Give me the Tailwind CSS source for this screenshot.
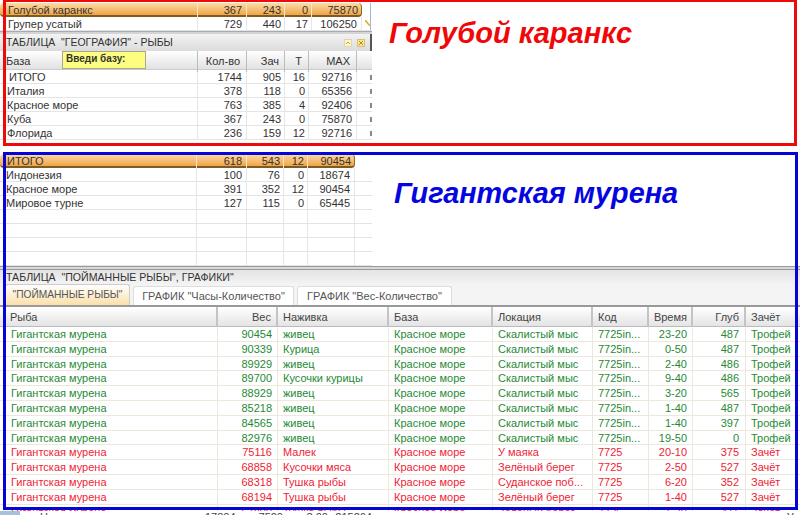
<!DOCTYPE html>
<html lang="en">

<head>
    <meta charset="UTF-8" />
    <title>Рыбы</title>
    <script src="https://cdn.jsdelivr.net/npm/@tailwindcss/browser@4"></script>
</head>

<body>
    <div class="relative w-[800px] h-[515px] overflow-hidden bg-white font-['Liberation_Sans',sans-serif] text-[11px] text-[#333]">
        <!-- ========== TOP TABLES ======= -->
        <div class="w-[372px] h-[266px] flex flex-col">
            <div class="h-[3px]"></div>
            <div id="fishRows"></div>
            <div class="h-[3px] bg-[#d4d4d4] border-t border-[#aaa]"></div>
            <div class="h-[17px] pl-[6px] flex items-center justify-between bg-gradient-to-b from-[#f3f3f3] to-[#dcdcdc]">
                <span class="text-[10.5px]">ТАБЛИЦА &nbsp;"ГЕОГРАФИЯ" - РЫБЫ</span>
                <span class="flex items-center gap-[5px] h-full">
                    <span class="w-[8px] h-[8px] flex items-center justify-center bg-[#fbf4cf] border border-[#ddd8b0]">
                        <svg viewBox="0 0 6 6" class="w-[6px] h-[6px]"><path d="M1 4 L3 2 L5 4" fill="none" stroke="#d8a030" stroke-width="1" /></svg>
                    </span>
                    <span class="w-[8px] h-[8px] flex items-center justify-center bg-[#f8e690] border border-[#d8c070]">
                        <svg viewBox="0 0 6 6" class="w-[6px] h-[6px]"><path d="M1 1 L5 5 M5 1 L1 5" fill="none" stroke="#c08820" stroke-width="1" /></svg>
                    </span>
                    <span class="w-[2px] h-full bg-[#555]"></span>
                </span>
            </div>
            <div class="relative h-[19px] grid grid-cols-[198px_49px_38px_24px_48px_15px] bg-gradient-to-b from-white to-[#e2e2e2] border-b border-[#ccc]">
                <div class="pl-[6px] leading-[21px] border-r border-[#bbb]">База</div>
                <div class="text-right pr-[6px] leading-[20px] border-r border-[#bbb]">Кол-во</div>
                <div class="text-right pr-[5px] leading-[20px] border-r border-[#bbb]">Зач</div>
                <div class="text-right pr-[6px] leading-[20px] border-r border-[#bbb]">Т</div>
                <div class="text-right pr-[6px] leading-[20px] border-r border-[#bbb]">MAX</div>
                <div></div>
                <div class="absolute left-[62px] top-0 w-[84px] h-[18px] pl-[3px] bg-[#fdfd80] border border-[#a8a890] text-[10px] font-bold leading-[13px]">Введи базу:</div>
            </div>
            <div id="geoRows"></div>
            <div class="h-[14px]"></div>
            <div id="geoRows2"></div>
        </div>
        <div class="h-[4px] bg-[#d8d8d8] border-y border-[#999]"></div>
        <!-- ========== CAUGHT FISH TABLE ======= -->
        <div class="h-[15px] pl-[6px] leading-[15px] text-[10.6px] bg-gradient-to-b from-[#e4e4e4] to-[#f4f4f4]">ТАБЛИЦА &nbsp;"ПОЙМАННЫЕ РЫБЫ", ГРАФИКИ"</div>
        <div class="h-[22px] pl-[5px] flex items-end gap-[3px] bg-[#f4f4f4] border-b-2 border-[#999] text-[#555] whitespace-nowrap">
            <div class="h-[21px] w-[125px] text-center text-[10.2px] leading-[20px] rounded-t-[3px] border border-b-0 border-[#ccc] bg-gradient-to-b from-[#fff] to-[#fbdfa8]">"ПОЙМАННЫЕ РЫБЫ"</div>
            <div class="h-[19px] w-[161px] text-center leading-[19px] rounded-t-[3px] border border-b-0 border-[#ddd] bg-white">ГРАФИК "Часы-Количество"</div>
            <div class="h-[19px] w-[155px] text-center leading-[19px] rounded-t-[3px] border border-b-0 border-[#ddd] bg-white">ГРАФИК "Вес-Количество"</div>
        </div>
        <div class="h-[20px] pl-[5px] grid grid-cols-[213px_60px_111px_104px_100px_56px_44px_53px_49px] bg-gradient-to-b from-white to-[#e4e4e4] border-b border-[#bbb] text-[#444]">
            <div class="pl-[5px] leading-[20px] border-r-2 border-[#c4c4c4]">Рыба</div>
            <div class="text-right pr-[5px] leading-[20px] border-r-2 border-[#c4c4c4]">Вес</div>
            <div class="pl-[5px] leading-[20px] border-r-2 border-[#c4c4c4]">Наживка</div>
            <div class="pl-[5px] leading-[20px] border-r-2 border-[#c4c4c4]">База</div>
            <div class="pl-[5px] leading-[20px] border-r-2 border-[#c4c4c4]">Локация</div>
            <div class="pl-[5px] leading-[20px] border-r-2 border-[#c4c4c4]">Код</div>
            <div class="text-right pr-[4px] leading-[20px] border-r-2 border-[#c4c4c4]">Время</div>
            <div class="text-right pr-[5px] leading-[20px] border-r-2 border-[#c4c4c4]">Глуб</div>
            <div class="pl-[5px] leading-[20px]">Зачёт</div>
        </div>
        <div id="catchRows"></div>

        <!-- ========== WINDOW BEHIND, PEEKING OUT AT THE BOTTOM ======= -->
        <div class="absolute left-0 right-0 top-[511px] h-[4px] overflow-hidden bg-white grid grid-cols-[20px_20px_165px_28px_50px_45px_44px_1fr] grid-rows-[4px] leading-[12px] text-[#444] whitespace-nowrap">
            <div class="bg-[#a9c0dc]"></div>
            <div></div>
            <div>Новосо</div>
            <div>17804</div>
            <div class="text-right">7520</div>
            <div class="text-right">3.00</div>
            <div class="text-right">215264</div>
            <div class="text-right pr-[1px]">Уо</div>
        </div>

        <!-- corner bits of the top table -->
        <div class="absolute left-[370px] top-[3px] w-[1px] h-[27px] bg-[#9db6da]"></div>
        <svg viewBox="0 0 5 6" class="absolute left-[365px] top-[20px] w-[5px] h-[6px]"><path d="M0 0 L5 6" stroke="#e0b020" stroke-width="1.5" /></svg>

        <!-- ========== ANNOTATION FRAMES ======= -->
        <div class="absolute left-[3px] top-[-1px] w-[794px] h-[147px] border-[3px] border-[#ee0a0a]"></div>
        <div class="absolute left-[3px] top-[152px] w-[795px] h-[358px] border-[3px] border-[#0505d8]"></div>
        <div class="absolute left-[389px] top-[15px] text-[29px] leading-[36px] font-bold italic text-[#f00808]">Голубой каранкс</div>
        <div class="absolute left-[394px] top-[175px] text-[28.8px] leading-[36px] font-bold italic text-[#0505e0]">Гигантская мурена</div>
    </div>

    <script>
        const fishCols = "grid-cols-[198px_49px_38px_27px_50px_10px]";
        const geoCols = "grid-cols-[198px_49px_38px_24px_48px_15px]";
        const geo2Cols = "grid-cols-[197px_50px_37px_24px_47px_17px]";
        const orangeRow = "bg-gradient-to-b from-[#fcdba4] to-[#efa544] border-b-2 border-b-[#7d5c24] border-r border-r-[#8a6a30] rounded-[4px]";

        function tableRow(r, cols, selected, tick) {
            const outer = selected ? `${orangeRow} ${r.end}` : "border-b border-[#e4e4e4]";
            const cell = selected ? "border-r border-[#f8e8c8]" : "border-r border-[#e6e6e6]";
            return `<div class="grid ${cols} ${outer} h-[14px] leading-[14px]">
                <div class="${r.pad} ${cell} whitespace-nowrap">${r.name}</div>
                <div class="text-right pr-[4px] ${cell}">${r.n}</div>
                <div class="text-right pr-[3px] ${cell}">${r.z}</div>
                <div class="text-right pr-[3px] ${cell}">${r.t}</div>
                <div class="text-right pr-[4px] ${selected ? "" : cell}">${r.max}</div>
                <div class="flex justify-end items-center">${tick ? '<span class="w-[2px] h-[5px] bg-[#888]"></span>' : ""}</div>
            </div>`;
        }

        const fish = [
            { name: "Голубой каранкс", n: 367, z: 243, t: 0, max: 75870, pad: "pl-[8px]", end: "mr-[10px]" },
            { name: "Групер усатый", n: 729, z: 440, t: 17, max: 106250, pad: "pl-[8px]" },
        ];
        const geo = [
            { name: "ИТОГО", n: 1744, z: 905, t: 16, max: 92716, pad: "pl-[9px]" },
            { name: "Италия", n: 378, z: 118, t: 0, max: 65356, pad: "pl-[7px]" },
            { name: "Красное море", n: 763, z: 385, t: 4, max: 92406, pad: "pl-[7px]" },
            { name: "Куба", n: 367, z: 243, t: 0, max: 75870, pad: "pl-[7px]" },
            { name: "Флорида", n: 236, z: 159, t: 12, max: 92716, pad: "pl-[7px]" },
        ];
        const blank = { name: "", n: "", z: "", t: "", max: "", pad: "pl-[6px]" };
        const geo2 = [
            { name: "ИТОГО", n: 618, z: 543, t: 12, max: 90454, pad: "pl-[7px]", end: "mr-[17px]" },
            { name: "Индонезия", n: 100, z: 76, t: 0, max: 18674, pad: "pl-[6px]" },
            { name: "Красное море", n: 391, z: 352, t: 12, max: 90454, pad: "pl-[6px]" },
            { name: "Мировое турне", n: 127, z: 115, t: 0, max: 65445, pad: "pl-[6px]" },
            blank, blank, blank, blank,
        ];
        document.getElementById("fishRows").innerHTML = fish.map((r, i) => tableRow(r, fishCols, i === 0, false)).join("");
        document.getElementById("geoRows").innerHTML = geo.map(r => tableRow(r, geoCols, false, true)).join("");
        document.getElementById("geoRows2").innerHTML = geo2.map((r, i) => tableRow(r, geo2Cols, i === 0, false)).join("");

        const G = "Гигантская мурена", S = "Скалистый мыс", K = "7725in...", M = "Красное море";
        const catches = [
            [90454, "живец", S, K, "23-20", 487, "Трофей"],
            [90339, "Курица", S, K, "0-50", 487, "Трофей"],
            [89929, "живец", S, K, "2-40", 486, "Трофей"],
            [89700, "Кусочки курицы", S, K, "9-40", 486, "Трофей"],
            [88929, "живец", S, K, "3-20", 565, "Трофей"],
            [85218, "живец", S, K, "1-40", 487, "Трофей"],
            [84565, "живец", S, K, "1-40", 397, "Трофей"],
            [82976, "живец", S, K, "19-50", 0, "Трофей"],
            [75116, "Малек", "У маяка", "7725", "20-10", 375, "Зачёт"],
            [68858, "Кусочки мяса", "Зелёный берег", "7725", "2-50", 527, "Зачёт"],
            [68318, "Тушка рыбы", "Суданское поб...", "7725", "6-20", 352, "Зачёт"],
            [68194, "Тушка рыбы", "Зелёный берег", "7725", "1-40", 527, "Зачёт"],
            [67800, "Тушка рыбы", "Зелёный берег", "7725", "1-30", 411, "Зачёт"],
        ];
        document.getElementById("catchRows").innerHTML = catches.map(c => {
            const color = c[6] === "Трофей" ? "text-[#1f8a35]" : "text-[#f01c34]";
            const cell = "border-r border-[#ece8dc]";
            return `<div class="h-[14.8px] leading-[14px] pl-[5px] grid grid-cols-[213px_60px_111px_104px_100px_56px_44px_53px_49px] border-b border-[#ece8dc] ${color}">
                <div class="pl-[6px] ${cell}">${G}</div>
                <div class="text-right pr-[5px] ${cell}">${c[0]}</div>
                <div class="pl-[5px] ${cell}">${c[1]}</div>
                <div class="pl-[5px] ${cell}">${M}</div>
                <div class="pl-[5px] ${cell}">${c[2]}</div>
                <div class="pl-[5px] ${cell}">${c[3]}</div>
                <div class="text-right pr-[5px] ${cell}">${c[4]}</div>
                <div class="text-right pr-[6px] ${cell}">${c[5]}</div>
                <div class="pl-[5px]">${c[6]}</div>
            </div>`;
        }).join("");
    </script>
</body>

</html>
